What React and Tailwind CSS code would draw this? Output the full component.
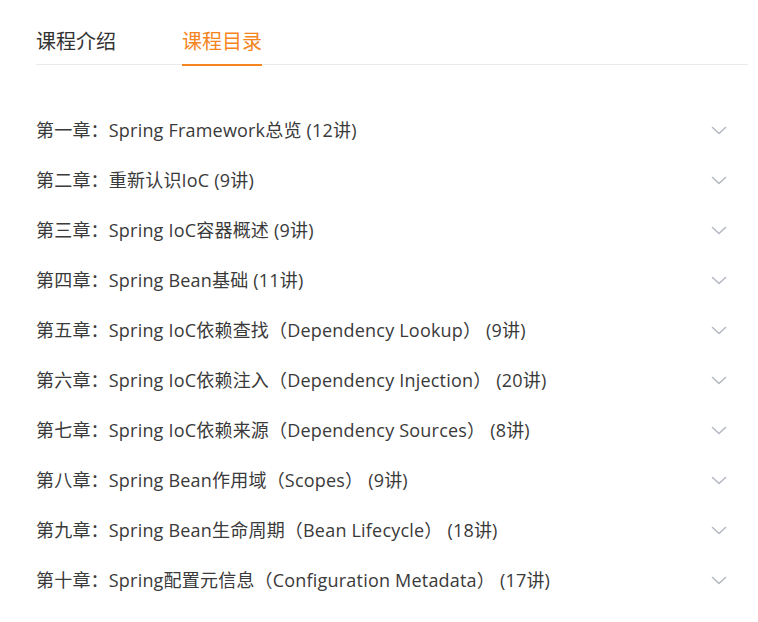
import { useState } from 'react'

const chapters = [
  '第一章：Spring Framework总览 (12讲)',
  '第二章：重新认识IoC (9讲)',
  '第三章：Spring IoC容器概述 (9讲)',
  '第四章：Spring Bean基础 (11讲)',
  '第五章：Spring IoC依赖查找（Dependency Lookup） (9讲)',
  '第六章：Spring IoC依赖注入（Dependency Injection） (20讲)',
  '第七章：Spring IoC依赖来源（Dependency Sources） (8讲)',
  '第八章：Spring Bean作用域（Scopes） (9讲)',
  '第九章：Spring Bean生命周期（Bean Lifecycle） (18讲)',
  '第十章：Spring配置元信息（Configuration Metadata） (17讲)',
]

function Chevron() {
  return (
    <svg width="16" height="9" viewBox="0 0 16 9" fill="none" className="flex-shrink-0">
      <path d="M1.5 1.5 L8 7.5 L14.5 1.5" stroke="#b4b9c2" strokeWidth="1.6" strokeLinecap="round" strokeLinejoin="round" />
    </svg>
  )
}

export default function App() {
  const [tab, setTab] = useState(1)
  const tabs = ['课程介绍', '课程目录']

  return (
    <div
      className="w-[758px] h-[622px] bg-white pl-9 pr-[10px] text-[#333]"
      style={{ fontFamily: '"Open Sans", "Noto Sans CJK SC", sans-serif' }}
    >
      <div className="flex gap-[66px] border-b border-[#ebebeb] h-[65px]">
        {tabs.map((t, i) => (
          <button
            key={t}
            onClick={() => setTab(i)}
            className={`relative pt-[19px] text-[20px] leading-[32px] h-[65px] ${tab === i ? 'text-[#f5861f]' : 'text-[#333]'}`}
          >
            {t}
            {tab === i && <span className="absolute left-0 right-0 bottom-[-1px] h-[2px] bg-[#f5861f]" />}
          </button>
        ))}
      </div>
      <ul className="pt-[40px]">
        {chapters.map((c) => (
          <li key={c} className="flex items-center justify-between h-[50px] pr-[21px] cursor-pointer">
            <span className="text-[18px] tracking-[0.2px] text-[#3a3a3a]">{c}</span>
            <Chevron />
          </li>
        ))}
      </ul>
    </div>
  )
}
